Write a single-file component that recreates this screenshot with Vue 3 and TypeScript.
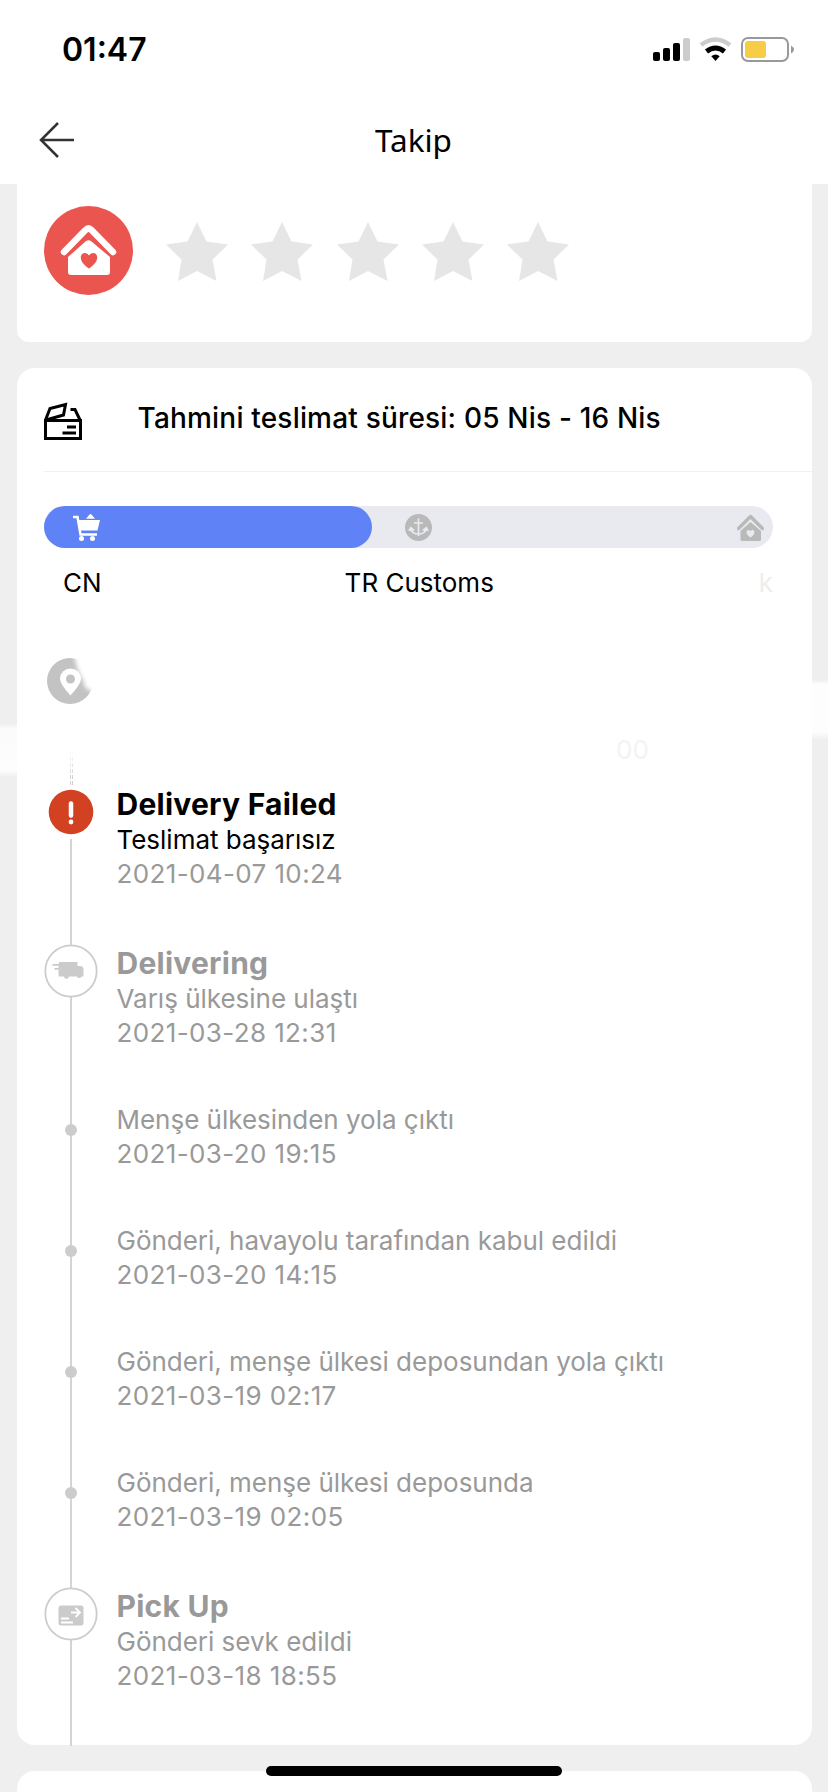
<script setup lang="ts">
interface TimelineEvent {
  title?: string
  text: string
  date: string
  icon: 'alert' | 'truck' | 'parcel' | 'dot'
  active?: boolean
}

const events: TimelineEvent[] = [
  { title: 'Delivery Failed', text: 'Teslimat başarısız', date: '2021-04-07 10:24', icon: 'alert', active: true },
  { title: 'Delivering', text: 'Varış ülkesine ulaştı', date: '2021-03-28 12:31', icon: 'truck' },
  { text: 'Menşe ülkesinden yola çıktı', date: '2021-03-20 19:15', icon: 'dot' },
  { text: 'Gönderi, havayolu tarafından kabul edildi', date: '2021-03-20 14:15', icon: 'dot' },
  { text: 'Gönderi, menşe ülkesi deposundan yola çıktı', date: '2021-03-19 02:17', icon: 'dot' },
  { text: 'Gönderi, menşe ülkesi deposunda', date: '2021-03-19 02:05', icon: 'dot' },
  { title: 'Pick Up', text: 'Gönderi sevk edildi', date: '2021-03-18 18:55', icon: 'parcel' },
]
</script>

<template>
  <div class="screen">
    <header class="top">
      <div class="status">
        <span class="clock">01:47</span>
        <svg class="indicators" width="144" height="28" viewBox="0 0 144 28">
          <rect x="1" y="16" width="7" height="9" rx="2" />
          <rect x="11" y="12" width="7" height="13" rx="2" />
          <rect x="21" y="7" width="7" height="18" rx="2" />
          <rect x="31" y="2" width="7" height="23" rx="2" fill="#ccc" />
          <path d="M49 9Q63.500 -2 78 9" fill="none" stroke="#ccc" stroke-width="4.500" />
          <path d="M54.500 15.500Q63.500 8.500 72.500 15.500" fill="none" stroke="#000" stroke-width="5" />
          <path d="M59.300 20.200Q63.500 17 67.700 20.200L63.500 25Z" />
          <rect x="90" y="2" width="46" height="23" rx="6" fill="none" stroke="#999" stroke-width="2" />
          <rect x="93" y="5" width="21" height="17" rx="3" fill="#f7cd47" />
          <path d="M139 9.500Q145 13.500 139 17.500Z" fill="#999" />
        </svg>
      </div>
      <div class="nav">
        <svg class="back" width="36" height="38" viewBox="0 0 36 38" fill="none" stroke="#333" stroke-width="2.500">
          <path d="M35 19H2M19 2L2 19L19 36" />
        </svg>
        <h1>Takip</h1>
      </div>
    </header>

    <section class="card rating">
      <svg class="logo" width="89" height="89" viewBox="0 0 89 89">
        <circle cx="44.500" cy="44.500" r="44.500" fill="#ea554f" />
        <path d="M20 46L41.500 24Q44.500 21 47.500 24L69 46" fill="none" stroke="#fff" stroke-width="6.500" stroke-linecap="round" stroke-linejoin="round" />
        <path d="M24 51L41.500 35.500Q44.500 33 47.500 35.500L66 51V66Q66 69 63 69H27Q24 69 24 66Z" fill="#fff" />
        <path d="M45 62.500C30 53 39 42 45 49.500C51 42 60 53 45 62.500Z" fill="#ea554f" />
      </svg>
      <div class="stars">
        <svg v-for="n in 5" :key="n" width="62" height="59" viewBox="0 0 62 59">
          <path d="M31 0L40.500 19.500L62 22.500L46.500 37.500L50.500 59L31 49L12 59L15.500 37.500L0 22.500L21.500 19.500Z" fill="#e6e6e7" />
        </svg>
      </div>
    </section>

    <section class="card tracking">
      <div class="estimate">
        <svg width="38" height="39" viewBox="0 0 38 39" fill="none" stroke="#000" stroke-width="3">
          <path d="M1.500 18.500H36.500V36.500H1.500ZM1.500 18L6 6.500L21.500 2.500L19.500 13L2 18M26.500 7.500H31L36.500 19M23 25H32M18.500 31H32" />
        </svg>
        <span>Tahmini teslimat süresi: 05 Nis - 16 Nis</span>
      </div>

      <div class="progress">
        <div class="fill">
          <svg width="27" height="27" viewBox="0 0 27 27" fill="#fff">
            <path d="M13 4.800L16.500 .500Q17.500 -.500 18.500 .500L22 4.800ZM5.500 6H27L24.500 16.500H7Z" />
            <path d="M0 3H4.500L7.500 20.500H24" fill="none" stroke="#fff" stroke-width="2.500" />
            <circle cx="8.500" cy="24.500" r="2.500" /><circle cx="19.500" cy="24.500" r="2.500" />
          </svg>
        </div>
        <svg class="anchor" width="27" height="27" viewBox="0 0 27 27">
          <circle cx="13.500" cy="13.500" r="13.500" fill="#b9b9ba" />
          <path d="M13.500 4.500V22M9 9H18M6 15.500Q7.500 20 13.500 20Q19.500 20 21 15.500" fill="none" stroke="#e9eaef" stroke-width="1.700" />
          <path d="M3 16.500L5.500 12.500L10 16L7 17.500ZM24 16.500L21.500 12.500L17 16L20 17.500Z" fill="#e9eaef" />
        </svg>
        <svg width="27" height="27" viewBox="0 0 27 27">
          <path d="M1.500 14.500L13.500 2.500L25.500 14.500" fill="none" stroke="#b9b9ba" stroke-width="3.400" stroke-linecap="round" stroke-linejoin="round" />
          <path d="M3.500 17L13.500 8L24 17V25.500Q24 27 22.500 27H5Q3.500 27 3.500 25.500Z" fill="#b9b9ba" />
          <path d="M13.500 23.500C6.500 19 10.500 13.500 13.500 17C16.500 13.500 20.500 19 13.500 23.500Z" fill="#e9eaef" />
        </svg>
      </div>
      <div class="stops">
        <span class="origin">CN</span>
        <span class="customs">TR Customs</span>
        <span class="trace">k</span>
      </div>

      <div class="address">
        <svg width="46" height="48" viewBox="0 0 46 48">
          <defs>
            <filter id="soft"><feGaussianBlur stdDeviation="2" /></filter>
          </defs>
          <circle cx="23" cy="24" r="23" fill="#c3c3c3" />
          <path d="M27 -4Q29 12 36 23Q38 34 45 34L56 30V-4Z" fill="#fff" filter="url(#soft)" />
          <path d="M23.500 38.500Q13 27 13 21.500A10.500 10 0 0 1 34 21.500Q34 27 23.500 38.500Z" fill="#fff" />
          <circle cx="23.500" cy="22" r="4.500" fill="#c3c3c3" />
        </svg>
        <span class="digits">00</span>
      </div>
      <div class="dashes"></div>

      <ol class="timeline">
        <li v-for="event in events" :key="event.date" :class="{ active: event.active }">
          <div class="rail">
            <svg v-if="event.icon === 'alert'" class="marker" width="54" height="54" viewBox="0 0 54 54">
              <circle cx="27" cy="27" r="27" fill="#fff" />
              <circle cx="27" cy="27" r="22.300" fill="#d34123" />
              <path d="M27 18.500V30.500" stroke="#fff" stroke-width="4.500" stroke-linecap="round" />
              <circle cx="27" cy="37" r="2.400" fill="#fff" />
            </svg>
            <svg v-else-if="event.icon !== 'dot'" class="marker" width="54" height="54" viewBox="0 0 54 54">
              <circle cx="27" cy="27" r="25.700" fill="#fff" stroke="#ccc" stroke-width="1.800" />
              <g v-if="event.icon === 'truck'" fill="#cbcbcb">
                <path d="M15 18H33.500V22H37Q39.500 22.500 39.500 25V32.500H37.500A2.300 2 0 0 1 33 32.500H25A2.300 2 0 0 1 20 32.500H14.500V25.500H17V24H14.500V21.500H15Z" />
                <path d="M8.500 20H17V21.700H8.500ZM10.500 24H17V25.700H10.500Z" />
              </g>
              <g v-else>
                <rect x="14.500" y="18.500" width="25" height="20" rx="2.500" fill="#cbcbcb" />
                <path d="M27 25.500H35.500M31.500 21L36 25.500L31.500 30M17 31.500H25M17 35.500H29" fill="none" stroke="#fff" stroke-width="1.800" />
              </g>
            </svg>
            <i v-else class="dot"></i>
          </div>
          <div class="details">
            <h2 v-if="event.title">{{ event.title }}</h2>
            <p>{{ event.text }}</p>
            <time>{{ event.date }}</time>
          </div>
        </li>
      </ol>
    </section>

    <section class="card next"></section>
    <div class="home-indicator"></div>
  </div>
</template>

<style>
body { margin: 0; background: #efefef; }
</style>

<style scoped>
* { box-sizing: border-box; }
.screen {
  position: relative;
  width: 828px;
  height: 1792px;
  overflow: hidden;
  background:
    linear-gradient(to bottom, transparent 724px, #fbfbfb 728px, #fdfdfd 770px, transparent 777px) left / 17px 100% no-repeat,
    linear-gradient(to bottom, transparent 680px, #fdfdfd 684px, #fdfdfd 732px, transparent 740px) right / 16px 100% no-repeat,
    #efefef;
  font-family: Inter, "Liberation Sans", sans-serif;
  color: #000;
}
svg { display: block; flex: none; }
.top { height: 184px; background: #fff; }
.status {
  height: 100px;
  padding: 0 32px 0 62px;
  display: flex;
  justify-content: space-between;
}
.clock { margin-top: 30px; font-size: 32px; line-height: 40px; font-weight: 600; }
.indicators { margin-top: 36px; }
.nav {
  height: 84px;
  padding-left: 39px;
  display: grid;
  grid-template-columns: 36px 1fr;
}
.back { margin-top: 21px; }
h1 {
  margin: 18px 76px 0 0;
  font: 400 31.500px/44px "Noto Sans", sans-serif;
  text-align: center;
}
.card { margin: 0 16px 0 17px; background: #fff; border-radius: 18px; }
.rating {
  height: 158px;
  padding: 22px 0 0 27px;
  border-radius: 0 0 12px 12px;
  display: flex;
}
.stars { display: flex; gap: 23.300px; margin: 15.500px 0 0 33px; }
.tracking { height: 1377px; margin-top: 26px; }
.estimate {
  height: 104px;
  margin-left: 27px;
  padding-top: 34px;
  border-bottom: 1px solid #f0f0f0;
  display: flex;
}
.estimate span {
  margin: -1px 0 0 55.500px;
  font-size: 28px;
  line-height: 34px;
  font-weight: 500;
  letter-spacing: .190px;
}
.progress {
  width: 729px;
  height: 42px;
  margin: 34px 0 0 27px;
  padding-right: 9px;
  border-radius: 21px;
  background: #e9eaef;
  display: flex;
  align-items: center;
  justify-content: space-between;
}
.fill {
  width: 328px;
  height: 42px;
  padding: 8px 0 0 29px;
  border-radius: 21px;
  background: #5f82f7;
}
.anchor { margin-right: 272px; }
.stops {
  height: 34px;
  margin-top: 18px;
  padding: 0 39px 0 46px;
  display: flex;
  font-size: 26px;
  line-height: 34px;
}
.customs { margin-left: 243px; }
.trace { margin-left: auto; color: #ededed; }
.address { height: 106px; margin: 57px 0 0 30px; display: flex; align-items: flex-start; }
.digits { margin: 76px 0 0 523px; font-size: 26px; line-height: 34px; color: #f3f3f3; }
.dashes {
  width: 3px;
  height: 34px;
  margin: -12px 0 0 53px;
  border: solid #d0d0d0;
  border-width: 0 1px;
  mask-image: repeating-linear-gradient(to bottom, #000 0 4px, transparent 4px 6px), linear-gradient(to bottom, transparent, #000 80%);
  mask-composite: intersect;
}
.timeline { margin: 0; padding: 0; list-style: none; }
li { display: flex; }
.rail {
  width: 54px;
  margin-left: 26.500px;
  display: flex;
  justify-content: center;
  align-items: flex-start;
  background: linear-gradient(#d4d4d4, #d4d4d4) 26.500px 0 / 2px 100% no-repeat;
}
.active .rail { background-position: 26.500px 20px; background-size: 2px calc(100% - 20px); }
.marker { margin-top: -.500px; }
.dot { width: 12px; height: 12px; margin: 21px 0 0 1px; border-radius: 50%; background: #ccc; }
.details { margin-left: 19px; padding-bottom: 53px; color: #999; white-space: nowrap; }
h2 { margin: 0; padding: 1px 0; font-size: 30px; line-height: 36px; font-weight: 700; letter-spacing: .250px; }
p, time { display: block; margin: 0; font-size: 26px; line-height: 34px; }
p { letter-spacing: -.020px; }
time { letter-spacing: .380px; }
.active h2, .active p { color: #000; }
.next { height: 60px; margin-top: 26px; }
.home-indicator {
  position: absolute;
  left: 266px;
  bottom: 16px;
  width: 296px;
  height: 10px;
  border-radius: 5px;
  background: #000;
}
</style>
